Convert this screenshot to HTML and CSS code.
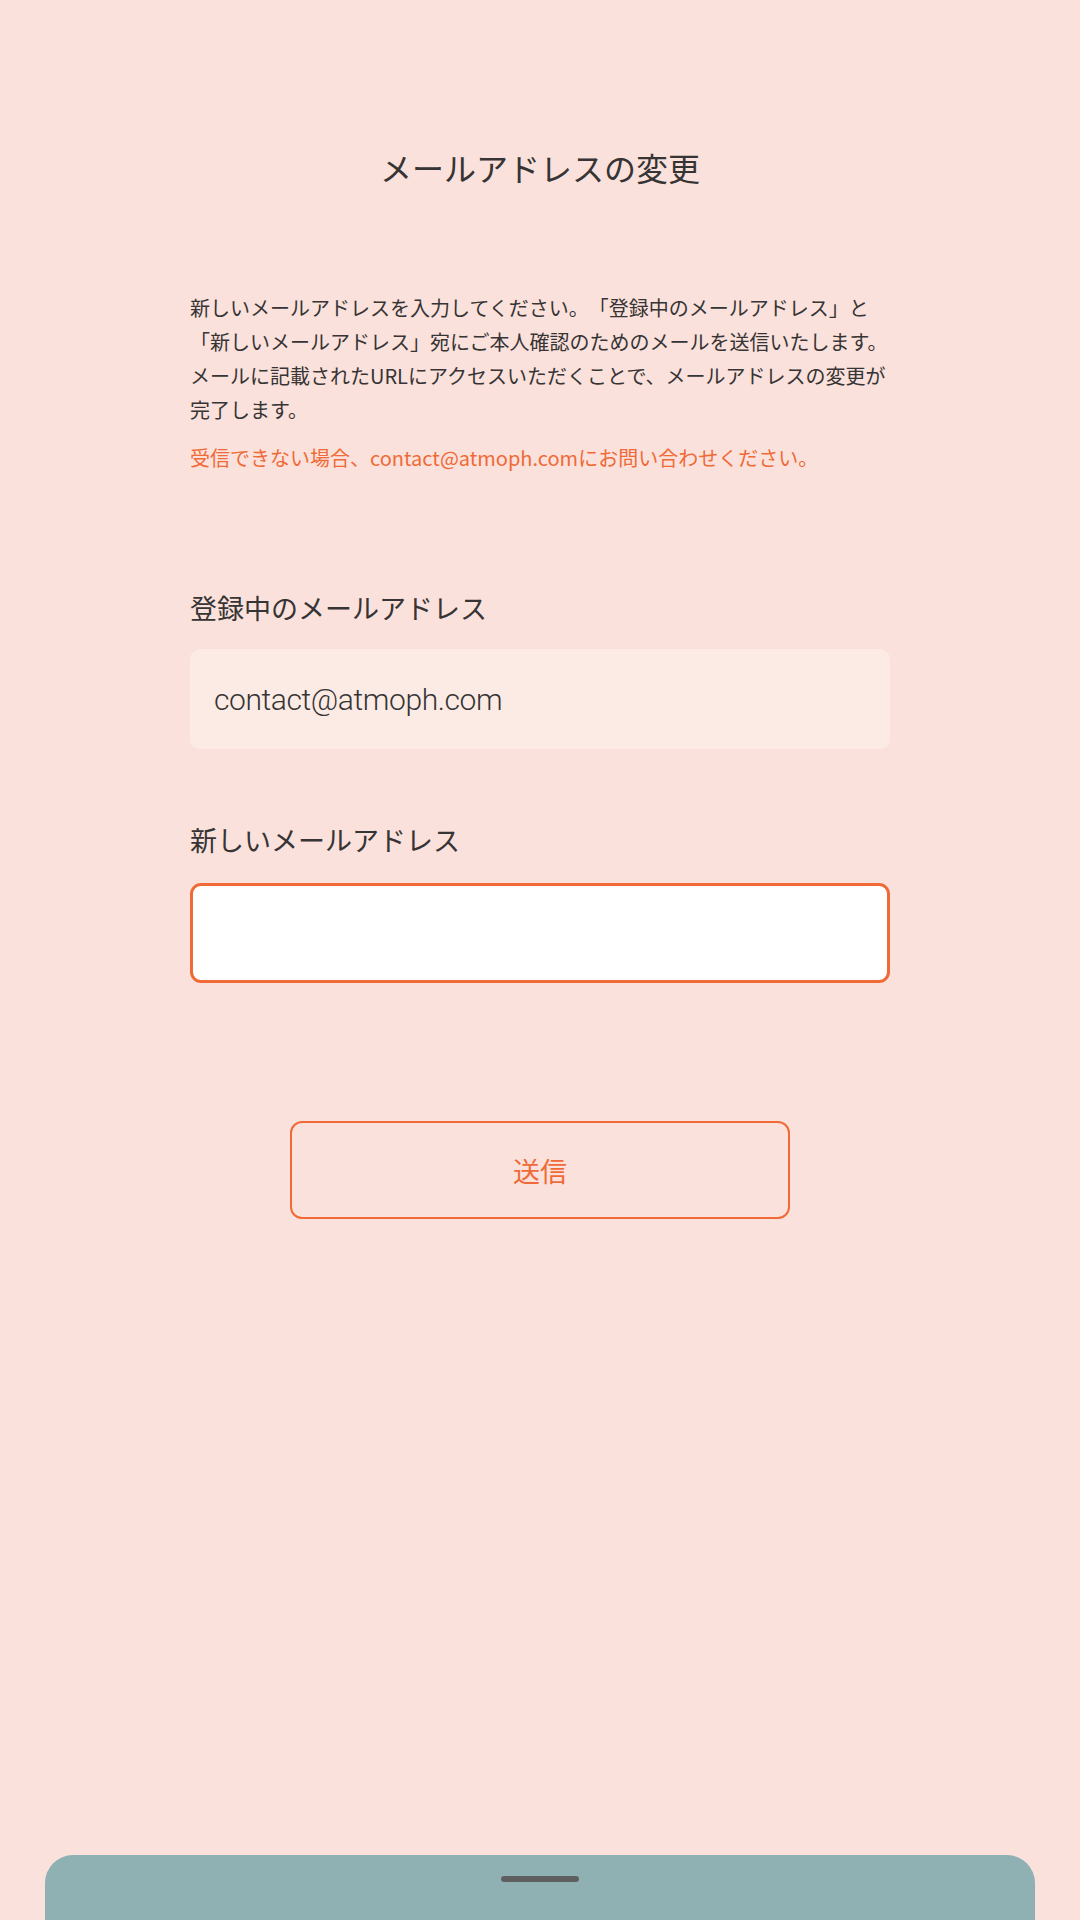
FILE: index.html
```html
<!doctype html>
<html lang="ja">
<head>
  <meta charset="utf-8">
  <title>メールアドレスの変更</title>
  <meta name="viewport" content="width=device-width,initial-scale=1">
  <link rel="stylesheet" href="styles.css">
</head>
<body>
  <main class="page">
    <h1 class="title">メールアドレスの変更</h1>

    <p class="lead">新しいメールアドレスを入力してください。「登録中のメールアドレス」と「新しいメールアドレス」宛にご本人確認のためのメールを送信いたします。メールに記載されたURLにアクセスいただくことで、メールアドレスの変更が完了します。</p>
    <p class="note">受信できない場合、contact@atmoph.comにお問い合わせください。</p>

    <form class="email-form" onsubmit="return false">
      <label class="field-label" for="current-email">登録中のメールアドレス</label>
      <input class="field field-readonly" id="current-email" type="email" value="contact@atmoph.com" readonly>

      <label class="field-label field-label-next" for="new-email">新しいメールアドレス</label>
      <input class="field field-active" id="new-email" type="email">

      <button class="submit-btn" type="submit">送信</button>
    </form>
  </main>

  <div class="sheet-peek">
    <span class="sheet-handle"></span>
  </div>
</body>
</html>
```

FILE: styles.css
```css
:root {
  --bg:        #fbe1db;
  --field-bg:  #fcebe5;
  --accent:    #ef6a37;
  --text-main: #363434;
  --sheet:     #8fb1b4;
}
*, *::before, *::after { box-sizing: border-box; }
html, body { height: 100%; }
body {
  margin: 0;
  min-height: 100vh;
  display: flex;
  flex-direction: column;
  background: var(--bg);
  color: var(--text-main);
  font-family: "Noto Sans CJK JP", "Noto Sans", sans-serif;
}

/* ── page ─────────────────────────────────────────────── */
.page {
  flex: 1;
  width: 700px;
  margin: 0 auto;
}
.title {
  margin: 144px 0 0;
  font-size: 32px;
  line-height: 46px;
  font-weight: 400;
  text-align: center;
}
.lead,
.note {
  font-size: 20px;
  line-height: 34px;
  text-spacing-trim: space-all;
}
.lead { margin: 101px -4px 0 0; }
.note {
  margin: 14px 0 0;
  color: var(--accent);
}

/* ── form ─────────────────────────────────────────────── */
.email-form {
  display: flex;
  flex-direction: column;
}
.field-label {
  display: block;
  margin-top: 115px;
  font-size: 27px;
  line-height: 36px;
}
.field-label-next { margin-top: 73px; }
.field {
  display: block;
  width: 100%;
  height: 100px;
  margin-top: 23px;
  padding: 0 24px;
  border: none;
  border-radius: 10px;
  font-family: Roboto, "Noto Sans CJK JP", sans-serif;
  font-size: 30px;
  font-weight: 300;
  letter-spacing: -0.4px;
  color: var(--text-main);
  outline: none;
}
.field-readonly { background: var(--field-bg); }
.field-active {
  margin-top: 25px;
  background: #fff;
  border: 3px solid var(--accent);
  border-radius: 11px;
}
.submit-btn {
  align-self: center;
  width: 500px;
  height: 98px;
  margin-top: 138px;
  background: transparent;
  border: 2px solid var(--accent);
  border-radius: 12px;
  color: var(--accent);
  font-family: "Noto Sans CJK JP", sans-serif;
  font-size: 27px;
  cursor: pointer;
}

/* ── bottom sheet peek ────────────────────────────────── */
.sheet-peek {
  height: 65px;
  margin: 0 45px;
  background: var(--sheet);
  border-radius: 28px 28px 0 0;
  display: flex;
  justify-content: center;
  padding-top: 21px;
}
.sheet-handle {
  width: 78px;
  height: 6px;
  border-radius: 3px;
  background: #5f5f5f;
}
```
